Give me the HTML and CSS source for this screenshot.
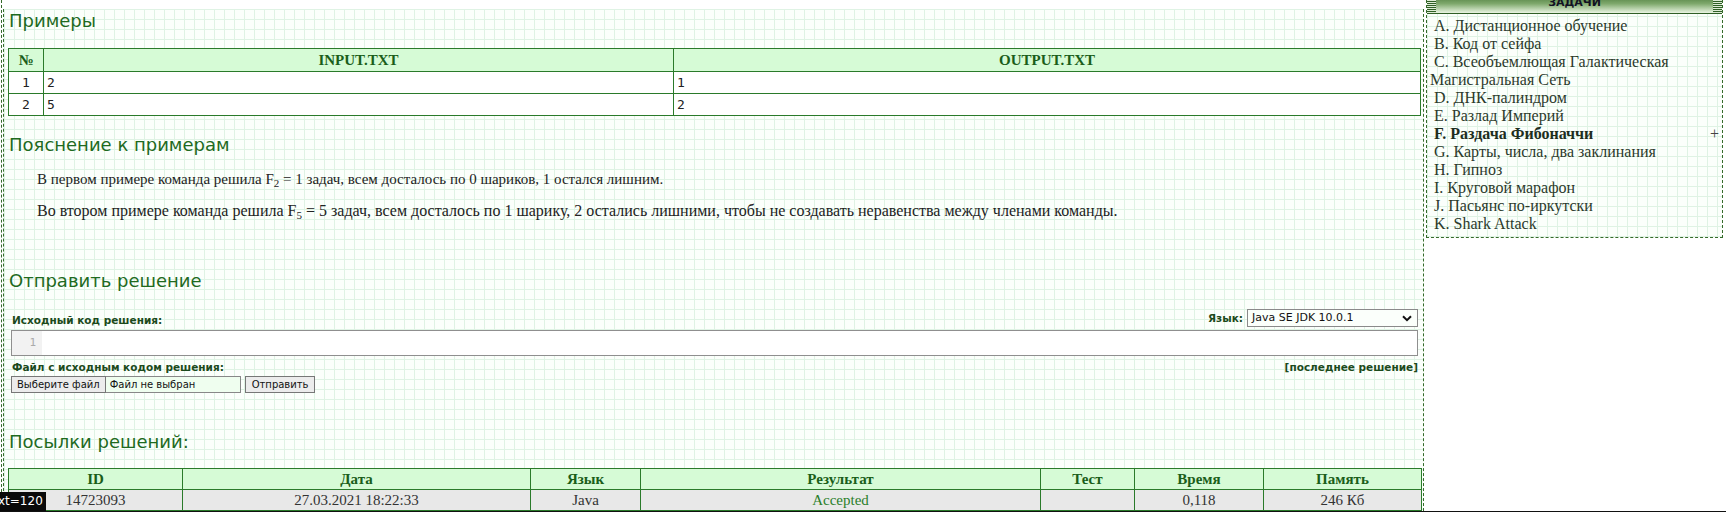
FILE: index.html
```html
<!DOCTYPE html>
<html lang="ru">
<head>
<meta charset="utf-8">
<title>F. Раздача Фибоначчи</title>
<link rel="stylesheet" href="styles.css">
</head>
<body>
<div class="page">
  <div class="frame">
    <div class="main grid">
      <h2 class="h-examples">Примеры</h2>
      <table class="samples">
        <colgroup><col class="c-num"><col class="c-in"><col class="c-out"></colgroup>
        <tr><th>№</th><th>INPUT.TXT</th><th>OUTPUT.TXT</th></tr>
        <tr><td class="num">1</td><td>2</td><td>1</td></tr>
        <tr><td class="num">2</td><td>5</td><td>2</td></tr>
      </table>

      <h2 class="h-notes">Пояснение к примерам</h2>
      <p class="note n1">В первом примере команда решила F<sub>2</sub> = 1 задач, всем досталось по 0 шариков, 1 остался лишним.</p>
      <p class="note n2">Во втором примере команда решила F<sub>5</sub> = 5 задач, всем досталось по 1 шарику, 2 остались лишними, чтобы не создавать неравенства между членами команды.</p>

      <h2 class="h-submit">Отправить решение</h2>
      <div class="form">
        <div class="row row-code">
          <span class="lbl">Исходный код решения:</span>
          <span class="lang"><span class="lbl">Язык:</span>
            <span class="select">Java SE JDK 10.0.1
              <svg class="chev" width="10" height="7" viewBox="0 0 10 7"><path d="M1 1.2 L5 5.2 L9 1.2" fill="none" stroke="#111" stroke-width="2"/></svg>
            </span>
          </span>
        </div>
        <div class="editor"><div class="gutter">1</div><div class="code"></div></div>
        <div class="row row-file">
          <span class="lbl">Файл с исходным кодом решения:</span>
          <span class="lbl">[последнее решение]</span>
        </div>
        <div class="row-btns">
          <span class="btn">Выберите файл</span><span class="fname">Файл не выбран</span><span class="btn send">Отправить</span>
        </div>
      </div>

      <h2 class="h-subs">Посылки решений:</h2>
      <table class="subs">
        <colgroup>
          <col style="width:174px"><col style="width:348px"><col style="width:110px"><col style="width:400px"><col style="width:94px"><col style="width:129px"><col style="width:158px">
        </colgroup>
        <tr><th>ID</th><th>Дата</th><th>Язык</th><th>Результат</th><th>Тест</th><th>Время</th><th>Память</th></tr>
        <tr class="odd"><td>14723093</td><td>27.03.2021 18:22:33</td><td>Java</td><td class="ok">Accepted</td><td></td><td>0,118</td><td>246 Кб</td></tr>
      </table>
    </div>
  </div>

  <div class="side">
    <div class="tasks grid">
      <div class="tasks-head"><span class="grip"></span><span class="title">ЗАДАЧИ</span><span class="grip"></span></div>
      <ul class="list">
        <li>А. Дистанционное обучение</li>
        <li>B. Код от сейфа</li>
        <li>C. Всеобъемлющая Галактическая Магистральная Сеть</li>
        <li>D. ДНК-палиндром</li>
        <li>E. Разлад Империй</li>
        <li class="cur">F. Раздача Фибоначчи<span class="plus">+</span></li>
        <li>G. Карты, числа, два заклинания</li>
        <li>H. Гипноз</li>
        <li>I. Круговой марафон</li>
        <li>J. Пасьянс по-иркутски</li>
        <li>K. Shark Attack</li>
      </ul>
    </div>
  </div>
</div>
<div class="tip">xt=120</div>
<div class="bottomline"></div>
</body>
</html>
```

FILE: styles.css
```css
html, body {
  margin: 0;
  padding: 0;
  background: #fff;
  overflow: hidden;
}
body {
  font-family: "Liberation Serif", "Times New Roman", serif;
  color: #222;
}
.grid {
  background-color: #fbfffb;
  background-image:
    linear-gradient(#dff3e4 1px, transparent 1px),
    linear-gradient(90deg, #dff3e4 1px, transparent 1px);
  background-size: 10px 10px;
}
.page {
  display: flex;
  align-items: flex-start;
  height: 512px;
}
.frame {
  margin-left: 1px;
  border-left: 1px dashed #356a2a;
  height: 512px;
}
.main {
  margin-left: 1px;
  border-left: 1px dashed #356a2a;
  border-right: 1px dashed #356a2a;
  padding: 0 2px 0 4px;
  width: 1413px;
  height: 512px;
  box-sizing: content-box;
}
h2 {
  font-family: "DejaVu Sans", Verdana, sans-serif;
  font-weight: normal;
  font-size: 18px;
  line-height: 24px;
  color: #1f6a1f;
  margin: 0;
  padding-left: 1px;
}
.h-examples { margin-top: 9px; }
.samples, .subs {
  border-collapse: collapse;
  table-layout: fixed;
  width: 1413px;
  border: 1px solid #2a7a2a;
}
.samples { margin-top: 15px; }
.c-num { width: 35px; }
.c-in { width: 630px; }
.samples th, .subs th {
  background: #d6fbd6;
  color: #1a5e1a;
  font-family: "Liberation Serif", "Times New Roman", serif;
  font-weight: bold;
  font-size: 15px;
  border: 1px solid #2a7a2a;
  padding: 0;
  text-align: center;
}
.samples th { height: 22px; }
.samples td {
  background: #fff;
  border: 1px solid #2a7a2a;
  height: 21px;
  padding: 0 3px;
  font-family: "DejaVu Sans Mono", "Liberation Mono", monospace;
  font-size: 13px;
  color: #222;
}
.samples td.num { text-align: center; }
.h-notes { margin-top: 17px; }
.note {
  margin: 0;
  padding-left: 29px;
  font-size: 15px;
  line-height: 18px;
  color: #222;
}
.note sub {
  font-size: 11px;
  line-height: 0;
  vertical-align: -3px;
}
.n1 { margin-top: 13px; }
.n2 { margin-top: 14px; font-size: 16px; }
.h-submit { margin-top: 49px; }
.form {
  padding: 0 3px 0 3px;
  font-family: "DejaVu Sans", Verdana, sans-serif;
}
.row {
  display: flex;
  justify-content: space-between;
  align-items: flex-end;
}
.lbl {
  font-size: 10.5px;
  font-weight: bold;
  line-height: 14px;
  color: #1c4a1c;
  padding-left: 1px;
}
.row-code { margin-top: 16px; }
.lang {
  display: flex;
  align-items: center;
  gap: 4px;
}
.select {
  position: relative;
  display: block;
  width: 171px;
  height: 18px;
  box-sizing: border-box;
  border: 1px solid #8a8a8a;
  background: #fbfffb;
  font-size: 11px;
  line-height: 16px;
  padding-left: 4px;
  color: #111;
}
.chev {
  position: absolute;
  right: 5px;
  top: 5px;
}
.editor {
  display: flex;
  margin-top: 3px;
  height: 26px;
  box-sizing: border-box;
  border: 1px solid #8f8f8f;
  background: #fff;
}
.gutter {
  width: 30px;
  background: #f2f2f2;
  font-family: "DejaVu Sans Mono", monospace;
  font-size: 11px;
  color: #aaa;
  text-align: right;
  padding-right: 6px;
  box-sizing: border-box;
  line-height: 24px;
}
.code { flex: 1; }
.row-file { margin-top: 4px; }
.row-btns {
  display: flex;
  align-items: center;
  margin-top: 2px;
  font-size: 10px;
}
.btn {
  display: block;
  height: 17px;
  box-sizing: border-box;
  border: 1px solid #777;
  background: #ececec;
  line-height: 15px;
  padding: 0 5px;
  color: #111;
}
.fname {
  display: block;
  width: 135px;
  height: 17px;
  box-sizing: border-box;
  border: 1px solid #888;
  border-left: none;
  background: #effeef;
  line-height: 15px;
  padding-left: 4px;
  color: #111;
}
.send { margin-left: 4px; padding: 0 6px; }
.h-subs { margin-top: 37px; }
.subs { margin-top: 14px; }
.subs th { height: 20px; font-size: 15px; }
.subs td {
  border: 1px solid #2a7a2a;
  height: 20px;
  padding: 0;
  text-align: center;
  font-size: 15px;
  color: #333;
  background: #e8e8e8;
}
.subs td.ok { color: #2a7f2a; }

.side {
  width: 301px;
  height: 512px;
  background: #fff;
}
.tasks {
  margin-left: 2px;
  margin-top: -5px;
  width: 297px;
  box-sizing: border-box;
  border: 1px dashed #356a2a;
  padding-bottom: 4px;
}
.tasks-head {
  display: flex;
  align-items: stretch;
  height: 18px;
  box-sizing: border-box;
  border-bottom: 1px solid #2f5f26;
  background: linear-gradient(#4f7d3f 0%, #7ea86c 45%, #e9f5e2 100%);
}
.grip {
  width: 9px;
  background: repeating-linear-gradient(#2f5f26 0 1px, #dcebd4 1px 2px);
  margin: 1px 0 0;
}
.title {
  flex: 1;
  text-align: center;
  font-family: "DejaVu Sans", Verdana, sans-serif;
  font-size: 11px;
  font-weight: bold;
  line-height: 14px;
  color: #112;
}
.list {
  list-style: none;
  margin: 3px 0 0;
  padding: 0 3px 0 3px;
  font-size: 16px;
  line-height: 18px;
  color: #2b3a2b;
}
.list li { text-indent: 4px; }
.list li.cur { font-weight: bold; color: #1e2e1e; }
.plus { float: right; font-weight: normal; color: #444; }
.tip {
  position: fixed;
  left: -2px;
  bottom: 1px;
  background: #0a0a0a;
  color: #fff;
  font-family: "DejaVu Sans", sans-serif;
  font-size: 12px;
  line-height: 19px;
  padding: 0 3px 0 0;
}
.bottomline {
  position: fixed;
  left: 0;
  right: 0;
  bottom: 0;
  height: 1px;
  background: #111;
}
```
